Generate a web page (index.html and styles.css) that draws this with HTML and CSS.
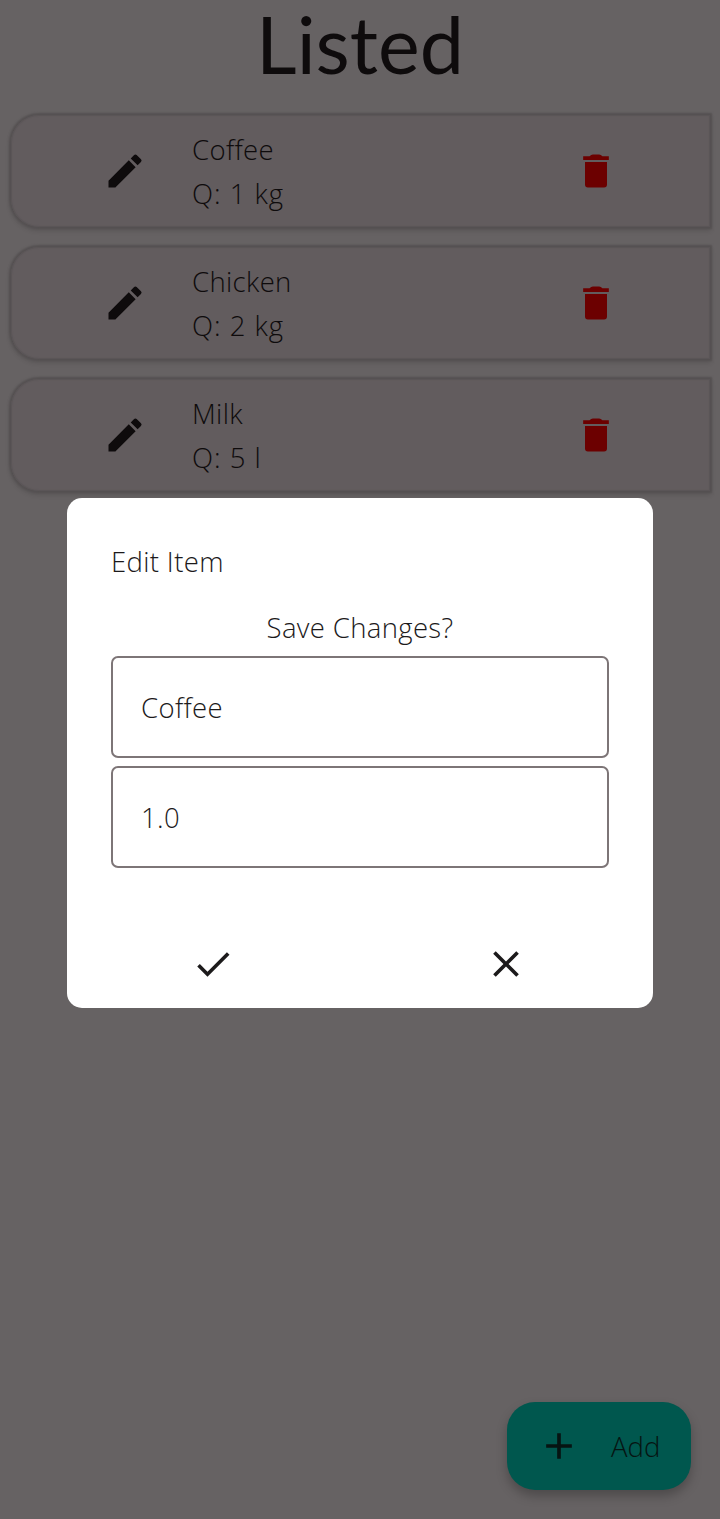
FILE: index.html
```html
<!DOCTYPE html>
<html lang="en">
<head>
<meta charset="utf-8">
<title>Listed</title>
<link rel="stylesheet" href="styles.css">
</head>
<body>
<svg class="defs" width="0" height="0">
  <symbol id="edit" viewBox="0 0 24 24"><path d="M3 17.25V21h3.75L17.81 9.94l-3.75-3.75L3 17.25zM20.71 7.04a1 1 0 0 0 0-1.41l-2.34-2.34a1 1 0 0 0-1.41 0l-1.83 1.83 3.75 3.75 1.83-1.83z"/></symbol>
  <symbol id="trash" viewBox="0 0 24 24"><path d="M6 19.4q0 1.6 1.6 1.6h8.8q1.6 0 1.6-1.6V7.1H6zM19 4h-3.5q-.8-1-1.8-1h-3.4q-1 0-1.8 1H5v2h14z"/></symbol>
  <symbol id="check" viewBox="0 0 24 24"><path d="M9 16.17 4.83 12l-1.42 1.41L9 19 21 7l-1.41-1.41z"/></symbol>
  <symbol id="close" viewBox="0 0 24 24"><path d="M19 6.41 17.59 5 12 10.59 6.41 5 5 6.41 10.59 12 5 17.59 6.41 19 12 13.41 17.59 19 19 17.59 13.41 12z"/></symbol>
  <symbol id="plus" viewBox="0 0 24 24"><path d="M19 13h-6v6h-2v-6H5v-2h6V5h2v6h6z"/></symbol>
</svg>
<main class="app">
  <h1 class="title">Listed</h1>
  <ul class="list">
    <li class="card">
      <svg class="icon"><use href="#edit"/></svg>
      <div class="info"><div>Coffee</div><div class="qty">Q: 1 kg</div></div>
      <svg class="icon delete"><use href="#trash"/></svg>
    </li>
    <li class="card">
      <svg class="icon"><use href="#edit"/></svg>
      <div class="info"><div>Chicken</div><div class="qty">Q: 2 kg</div></div>
      <svg class="icon delete"><use href="#trash"/></svg>
    </li>
    <li class="card">
      <svg class="icon"><use href="#edit"/></svg>
      <div class="info"><div>Milk</div><div class="qty">Q: 5 l</div></div>
      <svg class="icon delete"><use href="#trash"/></svg>
    </li>
  </ul>
  <button class="fab"><svg class="icon"><use href="#plus"/></svg><span>Add</span></button>
</main>
<section class="dialog">
  <h2 class="dialog-title">Edit Item</h2>
  <p class="question">Save Changes?</p>
  <div class="field">Coffee</div>
  <div class="field">1.0</div>
  <div class="actions">
    <svg class="icon"><use href="#check"/></svg>
    <svg class="icon"><use href="#close"/></svg>
  </div>
</section>
</body>
</html>
```
FILE: styles.css
```css
* { box-sizing: border-box; }
body {
  margin: 0;
  background: #666263;
  color: #0e0b0c;
  font: 330 27.5px/44px "Open Sans", "Noto Sans", sans-serif;
  font-variant-ligatures: none;
  letter-spacing: .35px;
}
.defs { position: absolute; }
.app {
  height: 1519px;
  display: flex;
  flex-direction: column;
}
.title {
  margin: 0;
  height: 112px;
  font: 400 79px/88px Lato, sans-serif;
  letter-spacing: 0;
  text-align: center;
}
.list {
  margin: 0;
  padding: 3px 10px 0 11px;
  list-style: none;
  display: flex;
  flex-direction: column;
  gap: 20px;
}
.card {
  height: 112px;
  padding: 0 92px;
  display: flex;
  align-items: center;
  border-radius: 28px 0 0 28px;
  background: #625c5e;
  box-shadow: inset 0 0 1px 1px #5a5557, 0 0 2px 2px #555152, 0 3px 5px 1px rgba(0, 0, 0, .12);
}
.icon {
  width: 44px;
  height: 44px;
  fill: currentColor;
  flex: none;
}
.info { flex: 1; padding: 2px 0 0 45px; }
.qty { letter-spacing: 1px; }
.delete { color: #6c0000; }
.fab {
  margin: auto 29px 29px auto;
  width: 184px;
  height: 88px;
  padding: 0 0 0 30px;
  display: flex;
  align-items: center;
  gap: 30px;
  border: 0;
  border-radius: 28px;
  background: #00574e;
  color: #061412;
  font: inherit;
  box-shadow: 0 6px 11px rgba(0, 0, 0, .25);
}
.fab span { padding-top: 2px; }
.dialog {
  position: absolute;
  left: 67px;
  top: 498px;
  width: 586px;
  height: 510px;
  padding: 42px 44px 0;
  border-radius: 15px;
  background: #fff;
  color: #1c1a1b;
}
.dialog-title, .question { margin: 0; font: inherit; }
.question { margin-top: 22px; text-align: center; }
.field {
  height: 102px;
  margin-top: 8px;
  padding: 2px 28px 0;
  display: flex;
  align-items: center;
  border: 2px solid #7d7577;
  border-radius: 7px;
}
.question + .field { margin-top: 6px; }
.actions {
  margin: 74px -43px 0 -45px;
  display: grid;
  grid-template-columns: 1fr 1fr;
  justify-items: center;
}
```
